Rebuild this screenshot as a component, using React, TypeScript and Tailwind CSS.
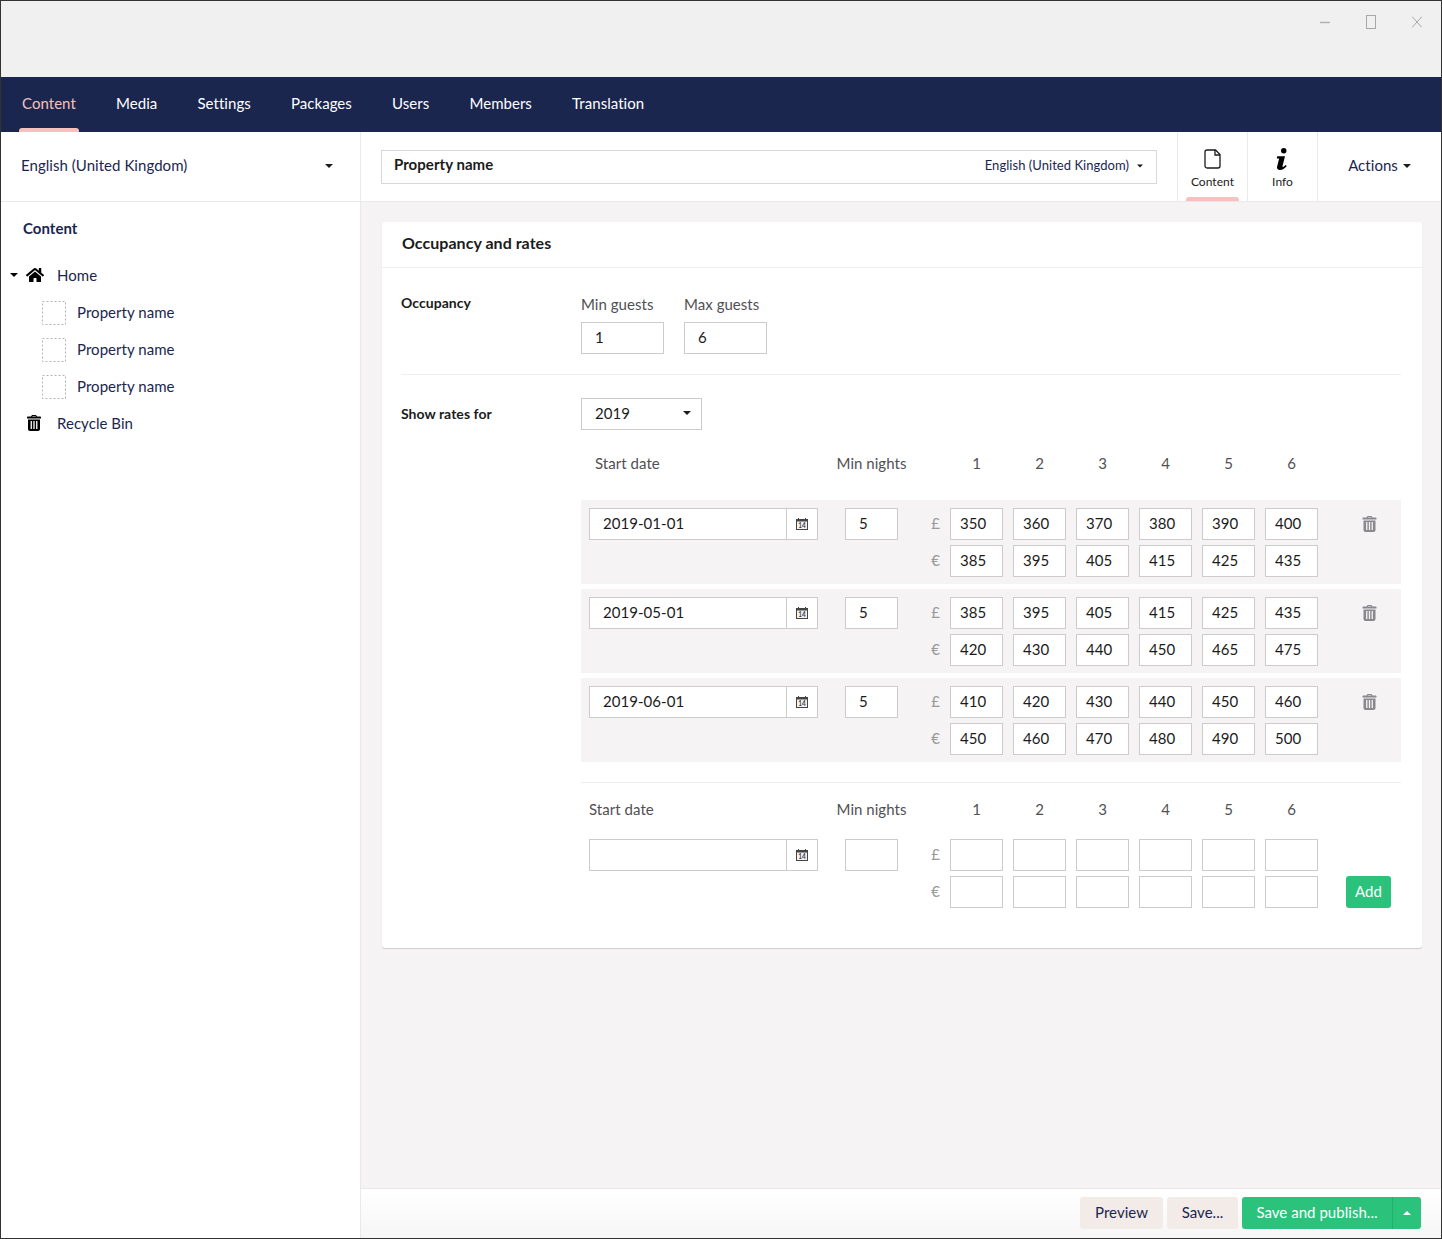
import { FaHome } from "react-icons/fa";

const navItems = ["Content", "Media", "Settings", "Packages", "Users", "Members", "Translation"];

const rates = [
  { date: "2019-01-01", gbp: ["350", "360", "370", "380", "390", "400"], eur: ["385", "395", "405", "415", "425", "435"] },
  { date: "2019-05-01", gbp: ["385", "395", "405", "415", "425", "435"], eur: ["420", "430", "440", "450", "465", "475"] },
  { date: "2019-06-01", gbp: ["410", "420", "430", "440", "450", "460"], eur: ["450", "460", "470", "480", "490", "500"] },
];

const blanks = ["", "", "", "", "", ""];
const guests = ["1", "2", "3", "4", "5", "6"];

const Caret = ({ up = false, className = "" }: { up?: boolean; className?: string }) => (
  <span
    className={`inline-block h-0 w-0 border-x-4 border-x-transparent ${
      up ? "border-b-4 border-b-current" : "border-t-4 border-t-current"
    } ${className}`}
  />
);

const Box = ({ value, className = "" }: { value: string; className?: string }) => (
  <div className={`flex h-8 shrink-0 items-center border border-[#cccccc] bg-white pb-[2px] text-[15px] text-[#1b1b1b] ${className}`}>
    {value}
  </div>
);

const TrashIcon = ({ className = "" }: { className?: string }) => (
  <svg viewBox="0 0 14 16" className={className} fill="currentColor">
    <path d="M5 0h4l1 1.5h3.2c.4 0 .8.4.8.8V3.5H0V2.3c0-.4.4-.8.8-.8H4L5 0zm.5 1L5.2 1.5h3.6L8.5 1h-3z" />
    <path
      fillRule="evenodd"
      d="M1 4.5h12V14c0 1.1-.9 2-2 2H3c-1.1 0-2-.9-2-2V4.5zM3.6 6v8h1.3V6H3.6zm2.75 0v8h1.3V6h-1.3zm2.75 0v8h1.3V6H9.1z"
    />
  </svg>
);

const CalendarIcon = () => (
  <svg viewBox="0 0 12 12" className="h-3 w-3 text-[#444]">
    <path fill="currentColor" d="M0 1h2V0h1v1h6V0h1v1h2v11H0V1z" />
    <rect x="1" y="3.5" width="10" height="7.5" fill="#f4f2f3" />
    <text x="6" y="10" textAnchor="middle" fontSize="6.5" fontWeight="700" fill="currentColor" fontFamily="Lato, sans-serif">
      14
    </text>
  </svg>
);

const DateField = ({ value }: { value: string }) => (
  <div className="flex h-8 w-[229px] shrink-0 border border-[#cccccc] bg-white">
    <div className="flex flex-1 items-center pb-[2px] pl-[13px] text-[15px] text-[#1b1b1b]">{value}</div>
    <div className="flex w-[31px] items-center justify-center border-l border-[#cccccc]">
      <CalendarIcon />
    </div>
  </div>
);

const PriceLine = ({ symbol, values }: { symbol: string; values: string[] }) => (
  <div className="flex items-center">
    <span className="w-[42px] pb-[2px] text-right text-[15px] text-[#9a9a9a]">{symbol}</span>
    <div className="ml-[10px] flex gap-[10px]">
      {values.map((v, i) => (
        <Box key={i} value={v} className="w-[53px] pl-[9px]" />
      ))}
    </div>
  </div>
);

const HeaderRow = ({ indent }: { indent: string }) => (
  <div className="flex h-5 items-center px-2 text-[15px] text-[#515054]">
    <div className={`w-[229px] ${indent}`}>Start date</div>
    <div className="ml-[27px] flex w-[53px] justify-center whitespace-nowrap">Min nights</div>
    <div className="ml-[52px] flex gap-[10px]">
      {guests.map((g) => (
        <div key={g} className="w-[53px] text-center">
          {g}
        </div>
      ))}
    </div>
  </div>
);

const App = () => {
  return (
    <div className="flex h-[1239px] w-[1442px] flex-col overflow-hidden border border-[#333333] bg-white font-['Lato',sans-serif] text-[15px] tracking-[0.04px] text-[#1b264f]">
      {/* window chrome */}
      <div className="flex h-[76px] shrink-0 justify-end gap-[36px] bg-[#f0f0f0] pr-[19px] pt-[14px]">
        <svg viewBox="0 0 10 14" className="h-[14px] w-[10px] text-[#b0b0b0]" stroke="currentColor" fill="none" strokeWidth="1.4">
          <path d="M0 7.5h10" />
        </svg>
        <svg viewBox="0 0 10 14" className="h-[14px] w-[10px] text-[#a8a8a8]" stroke="currentColor" fill="none">
          <rect x="0.5" y="0.5" width="9" height="13" />
        </svg>
        <svg viewBox="0 0 10 14" className="h-[14px] w-[10px] text-[#a8a8a8]" stroke="currentColor" fill="none">
          <path d="M0 1.5l10 11M10 1.5L0 12.5" />
        </svg>
      </div>

      {/* main nav */}
      <nav className="flex h-[55px] shrink-0 items-center gap-[40.2px] bg-[#1b264f] pl-[21px] text-white">
        {navItems.map((item, i) => (
          <div key={item} className={`relative flex h-full items-center pb-[2px] ${i === 0 ? "text-[#f5c1bc]" : ""}`}>
            {item}
            {i === 0 && <span className="absolute -inset-x-[3px] bottom-0 h-1 rounded-t-[3px] bg-[#f5c1bc]" />}
          </div>
        ))}
      </nav>

      <div className="flex min-h-0 flex-1">
        {/* tree */}
        <aside className="w-[360px] shrink-0 border-r border-[#e9e9eb]">
          <div className="flex h-[70px] items-center justify-between border-b border-[#e9e9eb] pb-[2px] pl-5 pr-[27px]">
            <span>English (United Kingdom)</span>
            <Caret className="text-[#1b1b1b]" />
          </div>
          <div className="pl-[22px] pt-[15px] font-bold">Content</div>
          <div className="pt-[18px]">
            <div className="relative flex h-[37px] items-center pb-[2px] pl-[25px]">
              <Caret className="absolute left-[9px] text-black" />
              <FaHome className="h-[18px] w-[18px] text-black" />
              <span className="ml-[13px]">Home</span>
            </div>
            {[0, 1, 2].map((n) => (
              <div key={n} className="flex h-[37px] items-center pl-[41px]">
                <svg viewBox="0 0 24 24" className="h-6 w-6" fill="none" stroke="#b5b5b5" strokeDasharray="2 2">
                  <rect x="0.5" y="0.5" width="23" height="23" />
                </svg>
                <span className="ml-[11px] pb-[2px]">Property name</span>
              </div>
            ))}
            <div className="flex h-[37px] items-center pb-[2px] pl-[26px]">
              <TrashIcon className="h-4 w-[14px] text-black" />
              <span className="ml-4">Recycle Bin</span>
            </div>
          </div>
        </aside>

        <main className="flex min-w-0 flex-1 flex-col bg-[#f5f3f4]">
          {/* editor header */}
          <header className="flex h-[70px] shrink-0 border-b border-[#e9e9eb] bg-white">
            <div className="flex flex-1 items-center pl-5 pr-5">
              <div className="flex h-[34px] w-full items-center justify-between border border-[#d8d7d9] pl-3 pr-3">
                <span className="relative -top-[2px] font-bold text-[#1b1b1b]">Property name</span>
                <span className="flex items-center gap-[7px] pb-[2px] text-[13px]">
                  English (United Kingdom)
                  <Caret className="scale-75 text-[#1b1b1b]" />
                </span>
              </div>
            </div>
            <div className="relative flex w-[70px] flex-col items-center border-l border-[#e9e9eb] pt-[17px] text-[12px] text-[#1b1b1b]">
              <svg viewBox="0 0 17 20" className="h-5 w-[17px]" fill="none" stroke="#1b1b1b" strokeWidth="1.3">
                <path d="M1 3a2 2 0 0 1 2-2h8.5L16 5.5V17a2 2 0 0 1-2 2H3a2 2 0 0 1-2-2V3z" />
                <path d="M11 1v5h5" />
              </svg>
              <span className="mt-[4px]">Content</span>
              <span className="absolute inset-x-2 bottom-0 h-1 rounded-t-[3px] bg-[#f5c1bc]" />
            </div>
            <div className="flex w-[70px] flex-col items-center border-l border-[#e9e9eb] pt-[16px] text-[12px] text-[#1b1b1b]">
              <svg viewBox="0 0 12 22" className="h-[23px] w-[13px]" fill="black">
                <circle cx="7.2" cy="2.6" r="2.6" />
                <path d="M1 8h7.4L6 17.2c-.2.9.7 1.1 1.4.5l1.7-1.5 1 1C8.4 19.2 6.4 21 3.6 21c-2.2 0-3.2-1.4-2.8-3.1l2-7.9H.5L1 8z" />
              </svg>
              <span className="mt-[2px]">Info</span>
            </div>
            <div className="flex w-[124px] shrink-0 items-center justify-center gap-[5px] border-l border-[#e9e9eb] pb-[2px]">
              Actions
              <Caret className="text-[#1b1b1b]" />
            </div>
          </header>

          {/* content */}
          <div className="min-h-0 flex-1 pl-[21px] pr-[19px] pt-5">
            <section className="h-[726px] rounded-[3px] bg-white shadow-[0_1px_1px_rgba(0,0,0,0.16)]">
              <div className="flex h-[46px] items-center border-b border-[#eeeeee] pb-1 pl-5 text-base font-bold text-[#1b1b1b]">
                Occupancy and rates
              </div>
              <div className="pl-[19px] pr-[21px]">
                <div className="flex h-[107px] border-b border-[#eeeeee] pt-[25px]">
                  <div className="w-[180px] text-sm font-bold leading-5 text-[#1b1b1b]">Occupancy</div>
                  <div className="flex gap-5">
                    <div>
                      <div className="h-[22px] text-[#515054]">Min guests</div>
                      <Box value="1" className="mt-[7px] w-[83px] pl-[13px]" />
                    </div>
                    <div>
                      <div className="h-[22px] text-[#515054]">Max guests</div>
                      <Box value="6" className="mt-[7px] w-[83px] pl-[13px]" />
                    </div>
                  </div>
                </div>

                <div className="flex pt-[23px]">
                  <div className="w-[180px] pt-[6px] text-sm font-bold leading-5 text-[#1b1b1b]">Show rates for</div>
                  <div className="w-[820px]">
                    <div className="flex h-8 w-[121px] items-center justify-between border border-[#cccccc] pb-[2px] pl-[13px] pr-[10px] text-[#1b1b1b]">
                      2019
                      <Caret className="text-[#1b1b1b]" />
                    </div>

                    <div className="mb-[27px] mt-[23px]">
                      <HeaderRow indent="pl-[6px]" />
                    </div>

                    <div className="flex flex-col gap-[5px]">
                      {rates.map((r) => (
                        <div key={r.date} className="flex h-[84px] bg-[#f5f3f4] px-2 pt-2">
                          <DateField value={r.date} />
                          <Box value="5" className="ml-[27px] w-[53px] pl-[13px]" />
                          <div className="flex flex-col gap-[5px]">
                            <PriceLine symbol="£" values={r.gbp} />
                            <PriceLine symbol="€" values={r.eur} />
                          </div>
                          <div className="ml-[44px] flex h-8 items-center">
                            <TrashIcon className="h-4 w-[15px] text-[#8a888c]" />
                          </div>
                        </div>
                      ))}
                    </div>

                    <div className="mt-5 border-t border-[#eeeeee] pt-[16px]">
                      <HeaderRow indent="" />
                      <div className="flex px-2 pt-5">
                        <DateField value="" />
                        <Box value="" className="ml-[27px] w-[53px]" />
                        <div className="flex flex-col gap-[5px]">
                          <PriceLine symbol="£" values={blanks} />
                          <PriceLine symbol="€" values={blanks} />
                        </div>
                        <div className="ml-[28px] flex items-end">
                          <button className="h-8 w-[45px] rounded-[3px] bg-[#2bc37c] pb-[2px] text-[15px] text-white">Add</button>
                        </div>
                      </div>
                    </div>
                  </div>
                </div>
              </div>
            </section>
          </div>

          {/* footer */}
          <footer className="flex h-[50px] shrink-0 items-start justify-end gap-1 border-t border-[#e9e9eb] bg-gradient-to-b from-white to-[#f7f6f7] pr-5 pt-2">
            <button className="h-8 w-[83px] rounded-[3px] bg-[#f2ebe8] pb-[2px] text-[#1b264f]">Preview</button>
            <button className="h-8 w-[71px] rounded-[3px] bg-[#f2ebe8] pb-[2px] text-[#1b264f]">Save...</button>
            <div className="flex h-8 w-[179px] rounded-[3px] bg-[#2bc37c] text-white">
              <span className="flex flex-1 items-center justify-center pb-[2px]">Save and publish...</span>
              <span className="flex w-[29px] items-center justify-center border-l border-[#25ad6d]">
                <Caret up />
              </span>
            </div>
          </footer>
        </main>
      </div>
    </div>
  );
};

export default App;
